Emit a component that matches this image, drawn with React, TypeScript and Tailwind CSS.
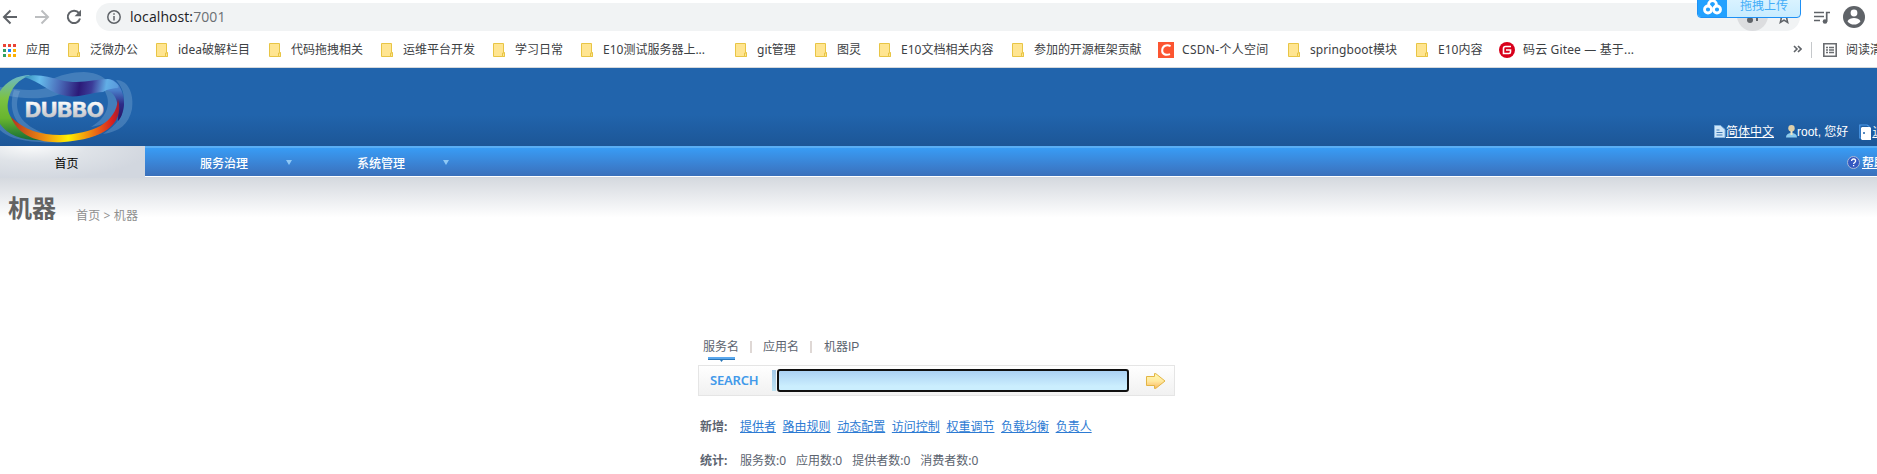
import type { ReactNode } from "react";

type Bookmark = { label: string; width: string; kind?: "csdn" | "gitee" };

const bookmarks: Bookmark[] = [
  { label: "泛微办公", width: "w-[88px]" },
  { label: "idea破解栏目", width: "w-[113px]" },
  { label: "代码拖拽相关", width: "w-[112px]" },
  { label: "运维平台开发", width: "w-[112px]" },
  { label: "学习日常", width: "w-[88px]" },
  { label: "E10测试服务器上...", width: "w-[154px]" },
  { label: "git管理", width: "w-[80px]" },
  { label: "图灵", width: "w-[64px]" },
  { label: "E10文档相关内容", width: "w-[133px]" },
  { label: "参加的开源框架贡献", width: "w-[146px] tracking-[-0.050px]" },
  { label: "CSDN-个人空间", width: "w-[130px] tracking-[0.300px]", kind: "csdn" },
  { label: "springboot模块", width: "w-[128px] tracking-[0.080px]" },
  { label: "E10内容", width: "w-[83px]" },
  { label: "码云 Gitee — 基于...", width: "w-[294px] tracking-[0.150px]", kind: "gitee" },
];

const createLinks = ["提供者", "路由规则", "动态配置", "访问控制", "权重调节", "负载均衡", "负责人"];

const stats = [
  { label: "服务数", count: 0 },
  { label: "应用数", count: 0 },
  { label: "提供者数", count: 0 },
  { label: "消费者数", count: 0 },
];

const appColors = ["#ea4335", "#ea4335", "#ea4335", "#34a062", "#1a84ff", "#fbb003", "#34a062", "#fbb003", "#fbb003"];

function FolderIcon() {
  return (
    <svg width="13" height="15" viewBox="0 0 13 15" className="shrink-0">
      <path d="M.5.5h10v9h1v4H.5z" fill="#ffe591" stroke="#e8c545" />
      <path d="M9.500 13.500V10h2v3.500z" fill="#ffe591" stroke="#e8c545" />
    </svg>
  );
}

function BookmarkIcon({ kind }: { kind?: Bookmark["kind"] }) {
  if (kind === "csdn") {
    return (
      <svg width="16" height="16" viewBox="0 0 16 16" className="mr-2 shrink-0">
        <path d="M0 0h16v16H0z" fill="#fc5531" />
        <path d="M12.600 4.100C8.500 2.200 4.600 3.700 4.200 8c-.4 4.200 3.400 5.800 7.800 4.100" fill="none" stroke="#fff" strokeWidth="2" />
      </svg>
    );
  }
  if (kind === "gitee") {
    return (
      <svg width="16" height="16" viewBox="0 0 16 16" className="mr-2 shrink-0">
        <circle cx="8" cy="8" r="8" fill="#d8001b" />
        <path d="M12 4.500H6.500a2 2 0 0 0-2 2v5h5.500a1.500 1.500 0 0 0 1.500-1.500V8H7" fill="none" stroke="#fff" strokeWidth="1.600" />
      </svg>
    );
  }
  return (
    <span className="mr-[9px]">
      <FolderIcon />
    </span>
  );
}

function Toolbar() {
  return (
    <div className="relative flex h-[34px] items-center pl-[2px]">
      <svg width="16" height="16" viewBox="0 0 16 16" fill="none" stroke="#5f6368" strokeWidth="2" className="shrink-0">
        <path d="M15 8H2.500M8.500 1.500 2 8l6.500 6.500" />
      </svg>
      <svg width="16" height="16" viewBox="0 0 16 16" fill="none" stroke="#bcbec0" strokeWidth="2" className="ml-4 shrink-0">
        <path d="M1 8h12.500M7.500 1.500 14 8l-6.500 6.500" />
      </svg>
      <svg width="16" height="16" viewBox="0 0 16 16" className="ml-4 shrink-0">
        <path d="M13 4.200A6.200 6.200 0 1 0 14 9.500" fill="none" stroke="#5f6368" strokeWidth="2" />
        <path d="M15 .8v6.400H8.600z" fill="#5f6368" />
      </svg>
      <div className="ml-[14px] flex h-7 w-[1704px] shrink-0 items-center rounded-full bg-[#f1f3f4] pl-[11px]">
        <svg width="14" height="14" viewBox="0 0 14 14" fill="none" stroke="#5f6368" strokeWidth="1.500">
          <circle cx="7" cy="7" r="6.200" />
          <path d="M7 6v4.500M7 3.300v1.500" />
        </svg>
        <span className="ml-[9px] pb-px font-['Open_Sans'] text-[14px] tracking-[0.080px] text-[#202124]">
          localhost:<span className="text-[#6b6f73]">7001</span>
        </span>
        <span className="ml-auto mb-[3px] flex h-[31px] w-[31px] items-center justify-center rounded-full bg-[#dcdddf]">
          <svg width="14" height="12" viewBox="0 0 14 12" fill="#5f6368" className="mt-1">
            <circle cx="4" cy="8" r="3" />
            <path d="M9 3h3v6h-2V6H9z" />
          </svg>
        </span>
        <svg width="14" height="14" viewBox="0 0 14 14" className="ml-[9px] mr-[9px]" fill="none" stroke="#5f6368" strokeWidth="1.500">
          <path d="m7 1 1.700 4 4.300.4-3.300 2.800 1 4.300L7 10.200 3.300 12.500l1-4.300L1 5.400 5.300 5z" />
        </svg>
      </div>
      <svg width="16" height="13" viewBox="0 0 16 13" className="ml-[14px] shrink-0">
        <path d="M0 1.500h10M0 5.500h10M0 9.500h6" stroke="#5f6368" strokeWidth="1.700" />
        <path d="M12.700 10.500v-9H16" fill="none" stroke="#5f6368" strokeWidth="1.700" />
        <circle cx="11" cy="10.500" r="2.300" fill="#5f6368" />
      </svg>
      <svg width="22" height="22" viewBox="0 0 22 22" className="ml-[13px] shrink-0">
        <circle cx="11" cy="11" r="11" fill="#5f6368" />
        <circle cx="11" cy="7" r="3.400" fill="#fff" />
        <path d="M4.500 15.200c1-2.300 4-3.100 6.500-3.100s5.500.8 6.500 3.100a8 8 0 0 1-13 0z" fill="#fff" />
      </svg>
      <div className="absolute -top-2 left-[1697px] z-10 flex h-[26px] w-[104px] overflow-hidden rounded-[4px] border border-[#1e90f5] bg-gradient-to-b from-[#e0f5ff] to-[#c8ecff]">
        <div className="flex w-[29px] shrink-0 items-center justify-center bg-[#22a1ff] pt-1">
          <svg width="19" height="16" viewBox="0 0 19 16" fill="none" stroke="#fff" strokeWidth="2.800">
            <circle cx="5" cy="10.500" r="3.500" />
            <circle cx="14" cy="10.500" r="3.500" />
            <path d="M6.500 7.500a3.700 3.700 0 1 1 6 0" />
          </svg>
        </div>
        <span className="ml-[13px] whitespace-nowrap pt-[5px] text-[12px] leading-[16px] text-[#43adf8]">拖拽上传</span>
      </div>
    </div>
  );
}

function BookmarksBar() {
  return (
    <div className="flex h-[34px] items-center overflow-hidden whitespace-nowrap border-b border-[#d5d9dc] pb-px pl-[3px] text-[12px] text-[#3c4043]">
      <div className="flex w-[65px] shrink-0 items-center">
        <svg width="13" height="13" viewBox="0 0 13 13" className="mr-[10px]">
          {appColors.map((color, i) => (
            <rect key={i} x={(i % 3) * 5} y={Math.floor(i / 3) * 5} width="3" height="3" fill={color} />
          ))}
        </svg>
        应用
      </div>
      {bookmarks.map((b) => (
        <div key={b.label} className={`flex shrink-0 items-center ${b.width}`}>
          <BookmarkIcon kind={b.kind} />
          <span>{b.label}</span>
        </div>
      ))}
      <svg width="9" height="8" viewBox="0 0 9 8" className="mb-[2px] shrink-0" fill="none" stroke="#5f6368" strokeWidth="1.600">
        <path d="m1 1 3 3-3 3M5 1l3 3-3 3" />
      </svg>
      <div className="ml-[9px] h-4 w-px shrink-0 bg-[#c5c8cb]" />
      <svg width="14" height="14" viewBox="0 0 14 14" className="ml-[11px] mr-[9px] shrink-0" fill="none" stroke="#6a6d71">
        <path d="M.8.8h12.400v12.400H.8z" strokeWidth="1.600" />
        <path d="M3 4.500h2m1 0h5M3 7h2m1 0h5M3 9.500h2m1 0h5" strokeWidth="1.400" />
      </svg>
      <span className="shrink-0">阅读清单</span>
    </div>
  );
}

function Logo() {
  return (
    <svg width="136" height="78" viewBox="0 0 136 78" className="shrink-0">
      <defs>
        <linearGradient id="top" x1="24" x2="124" y1="6" y2="22" gradientUnits="userSpaceOnUse">
          <stop offset="0" stopColor="#2f8fb4" />
          <stop offset=".16" stopColor="#66bcec" />
          <stop offset=".36" stopColor="#4a6dba" />
          <stop offset=".56" stopColor="#2c1a78" />
          <stop offset=".68" stopColor="#3b3c98" />
          <stop offset=".82" stopColor="#62aee6" />
          <stop offset=".93" stopColor="#5a9bdc" />
          <stop offset="1" stopColor="#31308c" />
        </linearGradient>
        <linearGradient id="side" x1="0" x2="0" y1="22" y2="50" gradientUnits="userSpaceOnUse">
          <stop offset="0" stopColor="#4a80cb" />
          <stop offset=".5" stopColor="#2d2b88" />
          <stop offset="1" stopColor="#2a1668" />
        </linearGradient>
        <linearGradient id="left" x1="0" x2="0" y1="8" y2="73" gradientUnits="userSpaceOnUse">
          <stop offset="0" stopColor="#6cb8c8" />
          <stop offset=".35" stopColor="#7cc242" />
          <stop offset=".65" stopColor="#68b52e" />
          <stop offset="1" stopColor="#126b37" />
        </linearGradient>
        <linearGradient id="bottom" x1="12" x2="120" y1="0" y2="0" gradientUnits="userSpaceOnUse">
          <stop offset="0" stopColor="#b63420" />
          <stop offset=".3" stopColor="#ef8f10" />
          <stop offset=".52" stopColor="#fff000" />
          <stop offset=".78" stopColor="#ea6815" />
          <stop offset=".93" stopColor="#d7201f" />
          <stop offset="1" stopColor="#981f38" />
        </linearGradient>
        <linearGradient id="word" x1="0" x2="0" y1="33" y2="49" gradientUnits="userSpaceOnUse">
          <stop offset="0" stopColor="#fff" />
          <stop offset="1" stopColor="#c4c6ca" />
        </linearGradient>
      </defs>
      <g fill="#a7c7e7" fillRule="evenodd" fillOpacity=".26">
        <path d="M50 12C60 7 72 4 84 4c14 1 22 5 27 14-14-4-22-3-33-3-10 0-19 0-28-3z" />
        <path d="M116 12c14 0 18 17 16 29-3 15-13 23-29 25 14-9 22-19 21-33 0-10-3-15-8-21z" />
        <path d="M0 53c7 10 20 18 39 18 25 1 45-1 66-7-22 9-48 12-66 10C18 73 6 68 0 62z" />
        <path d="M0 19c22 3 36 5 54-1l14 5c-16 8-40 10-68 3z" />
        <path d="M14 22c-6 18 0 36 18 42l14 2C20 57 12 42 20 23z" />
        <path d="M104 22c8 12 4 27-13 37 14-2 22-8 26-15 3-10 0-17-4-22z" />
      </g>
      <path d="M31 7C6 7-9 28-4 48 2 66 22 74 46 72 20 65 5 49 8 34 10 20 19 11 31 7z" fill="url(#left)" />
      <path d="M108 11c10 0 17 14 16 26-1 8-3 13-6 16 1-14 0-28-12-31z" fill="url(#side)" />
      <path d="M24 9c13-4 24 0 36 3 20 5 34-1 48-1 6 1 10 5 12 9-7 0-12 1-17 4-11 0-23 6-36 4C50 26 40 13 24 9z" fill="url(#top)" />
      <path d="M11 49c13 13 30 18 49 18 33-1 56-12 58-36 7 26-16 40-54 43-29 2-47-9-53-25z" fill="url(#bottom)" />
      <text x="25" y="49" textLength="79" lengthAdjust="spacingAndGlyphs" fill="url(#word)" stroke="url(#word)" strokeWidth=".6" className="font-['Inter'] text-[20px] font-bold">
        DUBBO
      </text>
    </svg>
  );
}

function Header() {
  return (
    <header className="flex h-[78px] overflow-hidden bg-gradient-to-b from-[#2164ac] from-60% to-[#1c5697] text-[12px] text-white">
      <Logo />
      <div className="ml-[1578px] flex shrink-0 items-center self-end whitespace-nowrap pb-[5px] leading-[18px]">
        <svg width="12" height="13" viewBox="0 0 12 13" className="mb-px">
          <path d="M.5.5h6l4.500 4v8H.5z" fill="#cfe6f8" stroke="#82b3df" />
          <path d="M2.500 5h3M2.500 7.500h6M2.500 10h6" stroke="#3d78b5" />
        </svg>
        <a className="underline">简体中文</a>
        <svg width="11" height="13" viewBox="0 0 11 13" className="mb-px ml-3">
          <path d="M0 12.500c0-3 2-4.500 5.500-4.500S11 9.500 11 12.500z" fill="#8ccbee" />
          <circle cx="5.500" cy="3.300" r="3.200" fill="#dfd0aa" />
          <path d="M4.500 6h2v4h-2z" fill="#efe3c1" />
        </svg>
        <span className="font-['Liberation_Sans','Noto_Sans_CJK_SC',sans-serif]">root, 您好</span>
        <svg width="13" height="17" viewBox="0 0 13 17" className="ml-[11px]">
          <path d="M10.500 2.500 8 1H.800v13H3" fill="none" stroke="#4e9bea" strokeWidth="1.200" />
          <path d="M3 3h8l1 1v12H3l-1-1V4z" fill="#fff" />
          <circle cx="5" cy="9" r="1" fill="#2164ac" />
        </svg>
        <a className="underline">退出</a>
      </div>
    </header>
  );
}

function NavItem({ children, className }: { children: ReactNode; className: string }) {
  return (
    <div className={`flex shrink-0 items-center pt-1 ${className}`}>
      <span>{children}</span>
      <svg width="6" height="5" viewBox="0 0 6 5" className="mb-[3px] ml-[38px]">
        <path d="M0 0h6L3 5z" fill="#8fc8f5" />
      </svg>
    </div>
  );
}

function Nav() {
  return (
    <nav className="flex h-8 overflow-hidden whitespace-nowrap bg-[#d0d5dd] text-[12px]">
      <div className="flex w-[145px] shrink-0 items-center justify-center bg-[radial-gradient(ellipse_at_22%_0%,#fafbfb_0%,#dfe3e8_35%,#d2d7df_75%)] pr-3 pt-[3px] text-black">
        首页
      </div>
      <div className="flex h-[31px] w-[1732px] shrink-0 border-b border-t-2 border-b-white border-t-[#59aef5] bg-gradient-to-b from-[#389cf5] to-[#3a70bb] font-medium text-white">
        <NavItem className="w-[157px] pl-[55px]">服务治理</NavItem>
        <NavItem className="w-[157px] pl-[55px]">系统管理</NavItem>
        <div className="ml-auto flex items-center pb-px pt-[2px] text-[12px]">
          <svg width="13" height="13" viewBox="0 0 13 13" className="mr-[2px]">
            <circle cx="6.500" cy="6.500" r="6" fill="#3559c2" stroke="#a9b8d5" />
            <path d="M4.600 5c0-2.700 4-2.600 4 0 0 1.500-2 1.400-2 3M6.600 9v1.300" fill="none" stroke="#fff" strokeWidth="1.300" />
          </svg>
          <span className="w-[15px] underline">帮助</span>
        </div>
      </div>
    </nav>
  );
}

function SearchPanel() {
  return (
    <div className="ml-[698px] mt-[116px] w-[477px] text-[12px] leading-[18px] text-[#5c6470]">
      <div className="flex h-[27px] pl-[5px]">
        <div className="flex w-9 flex-col items-center">
          <span>服务名</span>
          <svg width="27" height="5" viewBox="0 0 27 5" className="mt-px">
            <path d="M0 0h27v2H0z" fill="#5aa8ee" />
            <path d="M0 2h27v1H15l-1.500 2L12 3H0z" fill="#2876b8" />
          </svg>
        </div>
        <div className="ml-[11px] mt-[3px] h-3 w-[2px] bg-[#dfd8d5]" />
        <span className="ml-[11px]">应用名</span>
        <div className="ml-[11px] mt-[3px] h-3 w-[2px] bg-[#dfd8d5]" />
        <span className="ml-3">
          机器<span className="font-['Liberation_Sans']">IP</span>
        </span>
      </div>
      <div className="flex h-[31px] items-center border border-[#e5e5e5] bg-gradient-to-b from-white to-[#f1f1f1]">
        <span className="w-[73px] shrink-0 pb-px pl-[11px] font-['Noto_Sans'] text-[13px] font-semibold tracking-[-0.200px] text-[#4299ea]">
          SEARCH
        </span>
        <div className="h-[21px] w-1 shrink-0 bg-gradient-to-b from-[#a5c9e8] to-[#bfe3f2]" />
        <input className="ml-px h-[23px] w-[352px] shrink-0 rounded-[3px] border-2 border-[#101010] bg-gradient-to-b from-[#abd1f3] to-[#cbeefe] to-80% px-1 outline-none" />
        <svg width="20" height="16" viewBox="0 0 20 16" className="ml-[17px]">
          <defs>
            <linearGradient id="arrow" x1="0" x2="0" y1="0" y2="1">
              <stop offset="0" stopColor="#fff9b0" />
              <stop offset=".5" stopColor="#ffe9a0" />
              <stop offset="1" stopColor="#fbb864" />
            </linearGradient>
          </defs>
          <path d="M.5 3.500h8v-3l1.500.300L19 8l-9 7.200-1.500.300v-3h-8z" fill="url(#arrow)" stroke="#e2b544" />
        </svg>
      </div>
      <div className="mt-[22px] flex whitespace-nowrap pl-[2px]">
        <span className="w-10 font-bold">新增:</span>
        <div className="flex gap-[6.600px] text-[#2d7bd3]">
          {createLinks.map((link) => (
            <a key={link} className="underline">
              {link}
            </a>
          ))}
        </div>
      </div>
      <div className="mt-4 flex whitespace-nowrap pl-[2px]">
        <span className="w-10 font-bold">统计:</span>
        <div className="flex gap-[10px]">
          {stats.map((s) => (
            <span key={s.label}>
              {s.label}:{s.count}
            </span>
          ))}
        </div>
      </div>
    </div>
  );
}

export default function App() {
  return (
    <div className="h-[474px] w-[1877px] overflow-hidden bg-white font-['Noto_Sans','Noto_Sans_CJK_SC',sans-serif]">
      <Toolbar />
      <BookmarksBar />
      <Header />
      <Nav />
      <main>
        <div className="flex h-11 items-end bg-gradient-to-b from-[#d5d9df] to-white to-90% pl-2 leading-none">
          <h1 className="pb-[2px] text-[24px] font-bold text-[#626262]">机器</h1>
          <span className="ml-5 text-[12px] tracking-[0.150px] text-[#8f8f8f]">首页 &gt; 机器</span>
        </div>
        <SearchPanel />
      </main>
    </div>
  );
}
